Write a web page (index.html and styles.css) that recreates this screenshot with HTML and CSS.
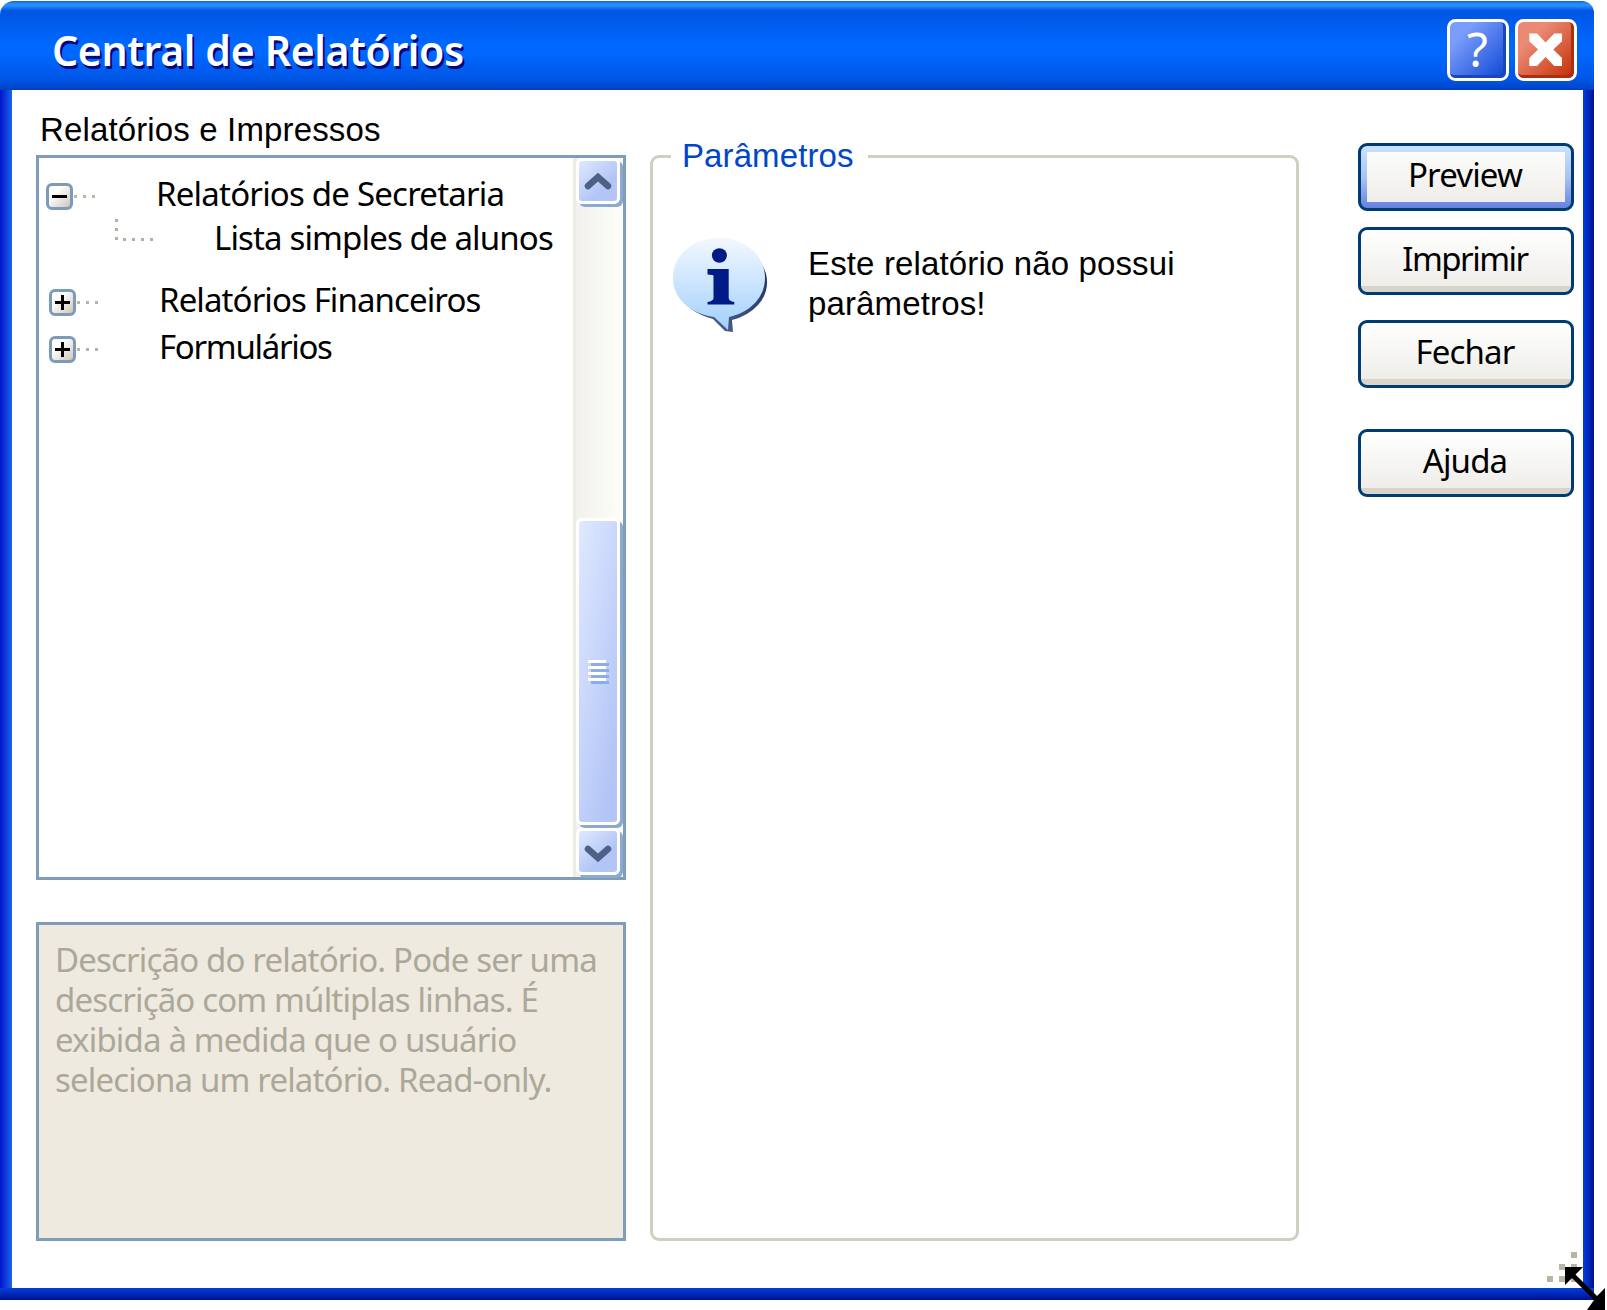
FILE: index.html
```
<!DOCTYPE html>
<html lang="pt-BR">
<head>
<meta charset="utf-8">
<title>Central de Relatórios</title>
<link rel="stylesheet" href="styles.css">
</head>
<body>
<div class="window">
  <header class="titlebar">
    <h1 class="title">Central de Relatórios</h1>
    <svg class="tb-btn" viewBox="0 0 62 62">
      <defs>
        <linearGradient id="gh" x1="0" y1="0" x2="1" y2="1"><stop offset=".25" stop-color="#7a9cfa"/><stop offset="1" stop-color="#124bd8"/></linearGradient>
        <linearGradient id="gc" x1="0" y1="0" x2="1" y2="1"><stop offset=".3" stop-color="#ea8a74"/><stop offset="1" stop-color="#c6330a"/></linearGradient>
      </defs>
      <rect x="1.5" y="1.5" width="59" height="59" rx="6" fill="#1b46b8"/>
      <rect x="2" y="2" width="54" height="54" rx="5" fill="url(#gh)"/>
      <rect x="1.5" y="1.5" width="59" height="59" rx="7" fill="none" stroke="#fff" stroke-width="3"/>
      <text class="help-mark" x="30.5" y="47.5" text-anchor="middle">?</text>
    </svg>
    <svg class="tb-btn" viewBox="0 0 62 62">
      <rect x="1.5" y="1.5" width="59" height="59" rx="6" fill="#ab2f12"/>
      <rect x="2" y="2" width="54" height="54" rx="5" fill="url(#gc)"/>
      <rect x="1.5" y="1.5" width="59" height="59" rx="7" fill="none" stroke="#fff" stroke-width="3"/>
      <path d="M14.300 14.500H22L30.600 23.500 39.200 14.500H47V22.300L38.300 30.600 47 39V47H39.200L30.600 38 22 47H14.300V39L23 30.600 14.300 22.300z" fill="#fff"/>
    </svg>
  </header>
  <main class="client">
    <section class="left">
      <h2 class="label">Relatórios e Impressos</h2>
      <div class="tree">
        <div class="nodes">
          <div class="node n1"><i class="toggle"></i><i class="dots"></i><span>Relatórios de Secretaria</span></div>
          <div class="node n2"><svg class="branch" viewBox="0 0 40 24"><path d="M1.500 0v21" stroke="#b3b1a2" stroke-width="3" stroke-dasharray="3 6"/><path d="M8 20.500h32" stroke="#b3b1a2" stroke-width="3" stroke-dasharray="3 6"/></svg><span>Lista simples de alunos</span></div>
          <div class="node n3"><i class="toggle plus"></i><i class="dots"></i><span>Relatórios Financeiros</span></div>
          <div class="node n4"><i class="toggle plus"></i><i class="dots"></i><span>Formulários</span></div>
        </div>
        <div class="scroll">
          <div class="sb up"><svg viewBox="0 0 28 20"><path d="M4 15 14 6l10 9" class="chev"/></svg></div>
          <div class="sb thumb"><i class="grip"></i></div>
          <div class="sb down"><svg viewBox="0 0 28 20"><path d="M4 5l10 9 10-9" class="chev"/></svg></div>
        </div>
      </div>
      <div class="desc">Descrição do relatório. Pode ser uma<br>descrição com múltiplas linhas. É<br>exibida à medida que o usuário<br>seleciona um relatório. Read-only.</div>
    </section>
    <fieldset class="params">
      <legend>Parâmetros</legend>
      <div class="info">
        <svg class="bubble" viewBox="0 0 95 94">
          <defs><linearGradient id="gb" x1="0" y1="0" x2="0" y2="1"><stop offset="0" stop-color="#f3f8ff"/><stop offset="1" stop-color="#a2d0fc"/></linearGradient>
          <linearGradient id="gs" x1="1" y1="0" x2="0" y2="1"><stop offset="0" stop-color="#1b3261"/><stop offset="1" stop-color="#54678f"/></linearGradient></defs>
          <path d="M88 25C97 38 96 55 85 67Q75 78 59 82L60 94 52 93 40 81Q28 78 18 71z" fill="url(#gs)"/>
          <path d="M46 0C72 0 92 17 92 40 92 60 76 75 56 79L55 92 41 79C18 76 0 61 0 40 0 17 20 0 46 0z" fill="url(#gb)"/>
          <ellipse cx="46.400" cy="17.500" rx="7.500" ry="7.300" fill="#001a86"/>
          <path d="M34.500 31H55.700V60Q55.700 63 61.300 64V66.500H34.500V64Q40.500 63 40.500 60V38Q40.500 36.500 34.500 36.500z" fill="#001a86"/>
        </svg>
        <p class="msg">Este relatório não possui<br>parâmetros!</p>
      </div>
    </fieldset>
    <nav class="actions">
      <button class="btn default">Preview</button>
      <button class="btn print">Imprimir</button>
      <button class="btn">Fechar</button>
      <button class="btn">Ajuda</button>
    </nav>
  </main>
</div>
<svg class="resize" viewBox="0 0 62 60">
  <path d="M26 0h6v6h-6zM14 12h6v6h-6zM26 12h6v6h-6zM2 24h6v6h-6zM14 24h6v6h-6zM26 24h6v6h-6z" fill="#b8b5a5"/>
  <path d="M20 15H38L30.500 22.500 52 44 60 36V58H42L49 48 27 26 20 33z" fill="#000"/>
</svg>
</body>
</html>
```
FILE: styles.css
```
* { box-sizing: border-box; }
body {
  margin: 0;
  width: 1607px;
  height: 1310px;
  padding-top: 1px;
  background: #fff;
  color: #000;
  font: 33px/40px "Liberation Sans", sans-serif;
  overflow: hidden;
  position: relative;
}
.window {
  width: 1594px;
  height: 1299px;
  display: flex;
  flex-direction: column;
  border-radius: 14px 12px 0 0;
  overflow: hidden;
}
.titlebar {
  height: 89px;
  flex: none;
  display: flex;
  align-items: center;
  gap: 6px;
  padding: 8px 17px 0 52px;
  background: linear-gradient(#0f62d8 0, #2a8dff 3px, #2a8dff 5px, #0f66ea 8px, #0055e2 10px, #0068ff 44px, #0068ff 52px, #0056e6 78px, #0048cf 86px, #003fc0 89px);
}
.title {
  margin: 0 auto 0 0;
  font: 600 41px/50px "Noto Sans", sans-serif;
  letter-spacing: -0.35px;
  color: #fff;
  text-shadow: 2px 3px 0 #00087c;
}
.tb-btn { width: 62px; height: 62px; }
.help-mark { font: 48px "Noto Sans", sans-serif; fill: #fff; }
.client {
  flex: 1;
  display: flex;
  border: solid;
  border-width: 0 11px 12px 12px;
  border-color: transparent;
  padding: 20px 9px 47px 24px;
  background:
    linear-gradient(#fff, #fff) padding-box,
    linear-gradient(#0040dc, #000f92) bottom / 100% 12px no-repeat border-box,
    linear-gradient(90deg, #0015c8, #1a63ee) left / 12px 100% no-repeat border-box,
    linear-gradient(90deg, #0040e0, #000f92) right / 11px 100% no-repeat border-box;
}
.left { width: 590px; display: flex; flex-direction: column; }
.label {
  margin: 0 0 0 4px;
  height: 45px;
  font: 33px/40px "Liberation Sans", sans-serif;
  letter-spacing: 0.14px;
}
.tree {
  height: 725px;
  flex: none;
  display: flex;
  border: 3px solid #7f9db9;
}
.nodes {
  flex: 1;
  min-width: 0;
  padding: 16px 0 0 7px;
  font-family: "Noto Sans", sans-serif;
  letter-spacing: -0.86px;
}
.node { display: flex; align-items: center; height: 40px; white-space: nowrap; }
.n1 { letter-spacing: -0.79px; }
.n2 { margin-top: 4px; padding-left: 69px; }
.n3 { margin-top: 22px; padding-left: 3px; letter-spacing: -0.9px; }
.n4 { margin-top: 7px; padding-left: 3px; letter-spacing: -1.3px; }
.toggle {
  width: 27px;
  height: 27px;
  margin-top: 4px;
  border: 3px solid #7c9aba;
  border-radius: 6px;
  background:
    linear-gradient(#000, #000) center / 15px 3px no-repeat,
    linear-gradient(135deg, #fff 30%, #cfc6ba);
}
.toggle.plus {
  background:
    linear-gradient(#000, #000) center / 15px 3px no-repeat,
    linear-gradient(#000, #000) center / 3px 15px no-repeat,
    linear-gradient(135deg, #fff 30%, #cfc6ba);
}
.dots {
  width: 21px;
  height: 3px;
  margin: 4px 61px 0 1px;
  background: repeating-linear-gradient(90deg, #b8b5a5 0 3px, transparent 3px 9px);
}
.branch { width: 40px; height: 24px; margin: -14px 59px 0 0; }
.scroll {
  width: 50px;
  display: flex;
  flex-direction: column;
  border-left: 3px solid #ecebe5;
  background: linear-gradient(90deg, #f2f1ed, #fdfdf9);
}
.sb {
  width: 44px;
  height: 47px;
  flex: none;
  display: flex;
  align-items: center;
  justify-content: center;
  border: 3px solid #fff;
  border-radius: 6px;
  background: linear-gradient(135deg, #e0e9ff, #b3c5f7 65%);
  box-shadow: 3px 3px 0 #8ca9d3;
}
.sb svg { width: 28px; height: 20px; }
.chev { fill: none; stroke: #4d6185; stroke-width: 6.5; stroke-linecap: round; }
.sb.up { height: 46px; }
.sb.thumb { height: 307px; margin: 314px 0 3px; background: linear-gradient(100deg, #e0e9ff, #b3c5f7 85%); }
.sb.down { padding-top: 4px; }
.grip {
  width: 21px;
  height: 24px;
  background:
    repeating-linear-gradient(#fff 0 3px, transparent 3px 6px) 0 0 / 18px 21px no-repeat,
    repeating-linear-gradient(transparent 0 3px, #8eabec 3px 6px) 3px 0 / 18px 24px no-repeat;
}
.desc {
  margin-top: 42px;
  height: 319px;
  flex: none;
  border: 3px solid #7f9db9;
  background: #eeeadf;
  color: #aca899;
  padding: 15px 0 0 16px;
  font-family: "Noto Sans", sans-serif;
  letter-spacing: -0.84px;
  white-space: nowrap;
}
.params {
  width: 649px;
  height: 1105px;
  margin: 26px 0 0 24px;
  padding: 0;
  border: 3px solid #d0d0bf;
  border-radius: 9px;
}
legend { margin-left: 18px; padding: 0 14px 0 11px; color: #0046c8; letter-spacing: 0.1px; white-space: nowrap; }
.info { display: flex; margin: 62px 0 0 20px; }
.bubble { width: 95px; height: 94px; flex: none; }
.msg { margin: 6px 0 0 40px; letter-spacing: 0.14px; white-space: nowrap; }
.actions { width: 216px; margin: 33px 0 0 auto; }
.btn {
  display: block;
  width: 216px;
  height: 68px;
  padding: 0 2px 5px 0;
  border: 3px solid #003c74;
  border-radius: 9px;
  color: #000;
  font: 33px/40px "Noto Sans", sans-serif;
  letter-spacing: -0.86px;
  background: linear-gradient(#fff, #eeede9 56px, #d9d5cb 56px);
}
.btn.print { letter-spacing: -1.5px; }
.btn + .btn { margin-top: 16px; }
.btn:nth-child(3) { margin-top: 25px; }
.btn:nth-child(4) { margin-top: 41px; }
.btn.default {
  background:
    linear-gradient(#fcfcfb, #eeede9) center / 198px 50px no-repeat,
    linear-gradient(#cbe2fe, #a9c4f5 50%, #6583df);
}
.resize { position: absolute; left: 1545px; top: 1252px; width: 62px; height: 60px; }
```
